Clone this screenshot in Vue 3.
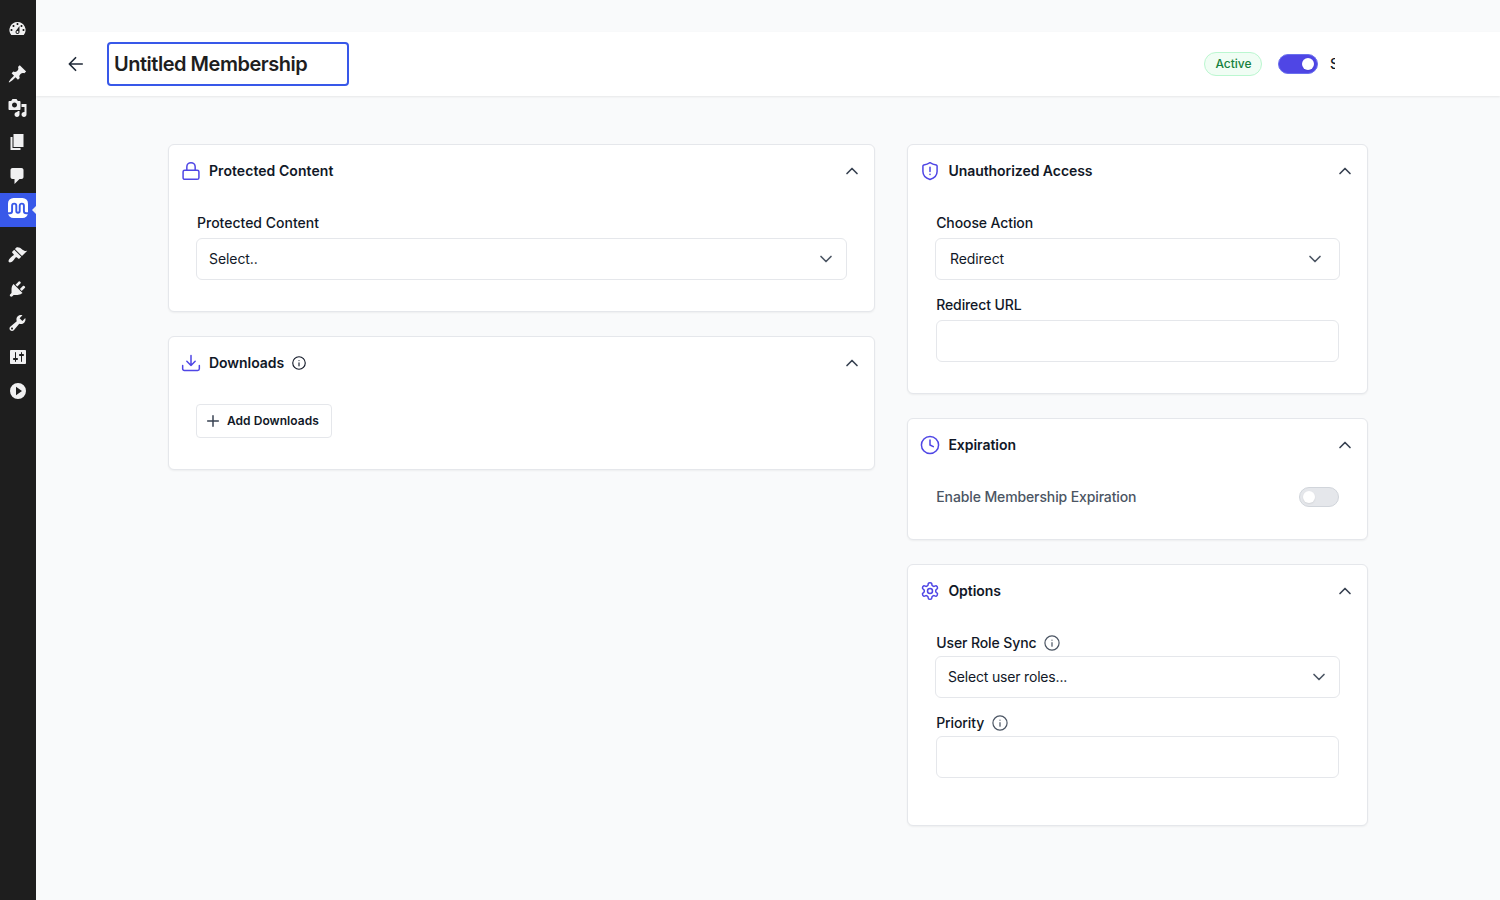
<script setup>
const menuTop = [
  { name: 'posts', d: 'M10.44 3.02l1.82-1.82 6.36 6.35-1.83 1.82c-1.05-.68-2.48-.57-3.41.36l-.75.75c-.92.93-1.04 2.35-.35 3.41l-1.83 1.82-2.41-2.41-2.8 2.79c-.42.42-3.38 2.71-3.8 2.29s1.86-3.39 2.28-3.81l2.79-2.79L4.1 9.36l1.83-1.82c1.05.69 2.48.57 3.4-.36l.75-.75c.93-.92 1.05-2.35.36-3.41z' },
  { name: 'media', d: 'M13 11V4c0-.55-.45-1-1-1h-1.67L9 1H5L3.67 3H2c-.55 0-1 .45-1 1v7c0 .55.45 1 1 1h10c.55 0 1-.45 1-1zM7 4.5c1.38 0 2.5 1.12 2.5 2.5S8.38 9.5 7 9.5 4.5 8.38 4.5 7 5.62 4.5 7 4.5zM14 6h5v10.5c0 1.38-1.12 2.5-2.5 2.5S14 17.88 14 16.5s1.12-2.5 2.5-2.5c.17 0 .34.02.5.05V9h-3V6zm-4 8.05V13h2v3.5c0 1.38-1.12 2.5-2.5 2.5S7 17.88 7 16.5 8.12 14 9.5 14c.17 0 .34.02.5.05z' },
  { name: 'pages', d: 'M6 15V2h10v13H6zm-1 1h8v2H3V5h2v11z' },
  { name: 'comments', d: 'M5 2h9c1.1 0 2 .9 2 2v7c0 1.1-.9 2-2 2h-2l-5 5v-5H5c-1.1 0-2-.9-2-2V4c0-1.1.9-2 2-2z' },
]
const menuBottom = [
  { name: 'appearance', d: 'M14.48 11.06L7.41 3.99l1.5-1.5c.5-.56 2.3-.47 3.51.32 1.21.8 1.43 1.28 2.91 2.1 1.18.64 2.45 1.26 4.45.85zm-.71.71L6.7 4.7 4.93 6.47c-.39.39-.39 1.02 0 1.41l1.06 1.06c.39.39.39 1.03 0 1.42-.6.6-1.43 1.11-2.21 1.69-.35.26-.7.53-1.01.84C1.43 14.23.4 16.08 1.4 17.07c.99 1 2.84-.03 4.18-1.36.31-.31.58-.66.85-1.02.57-.78 1.08-1.61 1.69-2.21.39-.39 1.02-.39 1.41 0l1.06 1.06c.39.39 1.02.39 1.41 0z' },
  { name: 'plugins', d: 'M13.11 4.36L9.87 7.6 8 5.73l3.24-3.24c.35-.34 1.05-.2 1.56.32.52.51.66 1.21.31 1.55zm-8 1.77l.91-1.12 9.01 9.01-1.19.84c-.71.71-2.63 1.16-3.82 1.16H6.14L4.9 17.26c-.59.59-1.54.59-2.12 0-.59-.58-.59-1.53 0-2.12l1.24-1.24v-3.88c0-1.13.4-3.19 1.09-3.89zm7.26 3.97l3.24-3.24c.34-.35 1.04-.21 1.55.31.52.51.66 1.21.31 1.55l-3.24 3.25z' },
  { name: 'tools', d: 'M16.68 9.77c-1.34 1.34-3.3 1.67-4.95.99l-5.41 6.52c-.99.99-2.59.99-3.58 0s-.99-2.59 0-3.57l6.52-5.42c-.68-1.65-.35-3.61.99-4.95 1.28-1.28 3.12-1.62 4.72-1.06l-2.89 2.89 2.82 2.82 2.86-2.87c.53 1.58.18 3.39-1.08 4.65zM3.81 16.21c.4.39 1.04.39 1.43 0 .4-.4.4-1.04 0-1.43-.39-.4-1.03-.4-1.43 0-.39.39-.39 1.03 0 1.43z' },
  { name: 'settings', d: 'M18 16V4c0-.55-.45-1-1-1H3c-.55 0-1 .45-1 1v12c0 .55.45 1 1 1h14c.55 0 1-.45 1-1zM8 11h1c.55 0 1 .45 1 1s-.45 1-1 1H8v1.5c0 .28-.22.5-.5.5s-.5-.22-.5-.5V13H6c-.55 0-1-.45-1-1s.45-1 1-1h1V5.5c0-.28.22-.5.5-.5s.5.22.5.5V11zm5-2h-1c-.55 0-1-.45-1-1s.45-1 1-1h1V5.5c0-.28.22-.5.5-.5s.5.22.5.5V7h1c.55 0 1 .45 1 1s-.45 1-1 1h-1v5.5c0 .28-.22.5-.5.5s-.5-.22-.5-.5V9z' },
  { name: 'collapse', d: 'M10 2a8 8 0 1 0 0 16 8 8 0 0 0 0-16zM8 14.2V5.8L14 10z' },
]
</script>

<template>
  <div class="page">
    <nav class="sidebar">
      <div class="item">
        <svg viewBox="0.5 0 20 20"><path fill-rule="evenodd" d="M3.76 16h12.48A7.998 7.998 0 0 0 10 3a7.998 7.998 0 0 0-6.24 13zM10 4c.55 0 1 .45 1 1s-.45 1-1 1-1-.45-1-1 .45-1 1-1zM6 6c.55 0 1 .45 1 1s-.45 1-1 1-1-.45-1-1 .45-1 1-1zm8 0c.55 0 1 .45 1 1s-.45 1-1 1-1-.45-1-1 .45-1 1-1zm-5.37 5.55L12 7v6c0 1.1-.9 2-2 2s-2-.9-2-2c0-.57.24-1.08.63-1.45zM4 10c.55 0 1 .45 1 1s-.45 1-1 1-1-.45-1-1 .45-1 1-1zm12 0c.55 0 1 .45 1 1s-.45 1-1 1-1-.45-1-1 .45-1 1-1zm-5 3c0-.55-.45-1-1-1s-1 .45-1 1 .45 1 1 1 1-.45 1-1z" /></svg>
      </div>
      <div class="spacer"></div>
      <div v-for="m in menuTop" :key="m.name" class="item">
        <svg viewBox="0.5 0 20 20"><path fill-rule="evenodd" :d="m.d" /></svg>
      </div>
      <div class="item active">
        <svg class="logo" viewBox="0 0 20 20">
          <rect width="20" height="20" rx="5.5" fill="#fff" />
          <path d="M-.5 15.200h2.300c1.500 0 2.300-.8 2.300-2.300V7.700a2.100 2.100 0 0 1 4.200 0v5.400a1.700 1.700 0 0 0 3.400 0V7.700a2.100 2.100 0 0 1 4.200 0v5.200c0 1.500.8 2.300 2.300 2.300h2.300" fill="none" stroke="#3858e9" stroke-width="1.900" />
        </svg>
      </div>
      <div class="spacer"></div>
      <div v-for="m in menuBottom" :key="m.name" class="item">
        <svg :viewBox="m.name === 'settings' || m.name === 'collapse' ? '0 0 20 20' : '0.5 0 20 20'"><path fill-rule="evenodd" :d="m.d" /></svg>
      </div>
    </nav>

    <div class="main">
      <header class="topbar">
        <svg class="ico back" viewBox="0 0 24 24"><path d="M11.500 19.500 4 12l7.500-7.500M4 12h15.500" /></svg>
        <div class="title">Untitled Membership</div>
        <div class="actions">
          <span class="badge">Active</span>
          <span class="toggle on"><i></i></span>
          <span class="clip">S</span>
        </div>
      </header>

      <div class="columns">
        <div class="col">
          <section class="card">
            <div class="head">
              <svg class="ico lead" viewBox="0 0 24 24"><rect x="2.500" y="11" width="19" height="11" rx="2" /><path d="M7 11V7a5 5 0 0 1 10 0v4" /></svg>
              <h2 class="wide">Protected Content</h2>
              <svg class="ico chev" viewBox="0 0 24 24"><path d="m18 15-6-6-6 6" /></svg>
            </div>
            <div class="body">
              <div class="label">Protected Content</div>
              <div class="select"><span>Select..</span><svg class="ico down" viewBox="0 0 24 24"><path d="m6 9 6 6 6-6" /></svg></div>
            </div>
          </section>

          <section class="card">
            <div class="head">
              <svg class="ico lead" viewBox="0 0 24 24"><path d="M22 15v4a2 2 0 0 1-2 2H4a2 2 0 0 1-2-2v-4M7 10l5 5 5-5M12 15V3" /></svg>
              <h2>Downloads</h2>
              <svg class="ico info small" viewBox="0 0 24 24"><circle cx="12" cy="12" r="10" /><path d="M12 16.500v-5M12 8v.1" /></svg>
              <svg class="ico chev" viewBox="0 0 24 24"><path d="m18 15-6-6-6 6" /></svg>
            </div>
            <div class="body">
              <div class="button"><svg class="ico plus" viewBox="0 0 24 24"><path d="M4 12h16M12 4v16" /></svg>Add Downloads</div>
            </div>
          </section>
        </div>

        <div class="col right">
          <section class="card">
            <div class="head">
              <svg class="ico lead" viewBox="0 0 24 24"><path d="M20.500 12.500c0 5-3.300 8-8.500 9.700-5.200-1.700-8.500-4.700-8.500-9.700V6c0-.7.4-1 1-1.200C7.500 4.400 9.700 3.600 12 2c2.300 1.600 4.500 2.400 7.500 2.800.6.200 1 .5 1 1.200zM12 7.500v5M12 16v.1" /></svg>
              <h2>Unauthorized Access</h2>
              <svg class="ico chev" viewBox="0 0 24 24"><path d="m18 15-6-6-6 6" /></svg>
            </div>
            <div class="body">
              <div class="label">Choose Action</div>
              <div class="select native"><span>Redirect</span><svg class="ico down" viewBox="0 0 24 24"><path d="m6 9 6 6 6-6" /></svg></div>
              <div class="label next">Redirect URL</div>
              <div class="input"></div>
            </div>
          </section>

          <section class="card">
            <div class="head">
              <svg class="ico lead" viewBox="0 0 24 24"><circle cx="12" cy="12" r="10.300" /><path d="M12 6v6l4 2" /></svg>
              <h2>Expiration</h2>
              <svg class="ico chev" viewBox="0 0 24 24"><path d="m18 15-6-6-6 6" /></svg>
            </div>
            <div class="body expiry">
              <span class="hint">Enable Membership Expiration</span>
              <span class="toggle"><i></i></span>
            </div>
          </section>

          <section class="card">
            <div class="head">
              <svg class="ico lead" viewBox="0 0 24 24"><path d="M12.220 2h-.44a2 2 0 0 0-2 2v.18a2 2 0 0 1-1 1.730l-.43.25a2 2 0 0 1-2 0l-.15-.08a2 2 0 0 0-2.730.730l-.22.38a2 2 0 0 0 .73 2.730l.15.1a2 2 0 0 1 1 1.720v.51a2 2 0 0 1-1 1.740l-.15.09a2 2 0 0 0-.73 2.730l.22.38a2 2 0 0 0 2.730.730l.15-.08a2 2 0 0 1 2 0l.43.25a2 2 0 0 1 1 1.730V20a2 2 0 0 0 2 2h.44a2 2 0 0 0 2-2v-.18a2 2 0 0 1 1-1.730l.43-.25a2 2 0 0 1 2 0l.15.08a2 2 0 0 0 2.730-.73l.22-.39a2 2 0 0 0-.73-2.730l-.15-.08a2 2 0 0 1-1-1.740v-.5a2 2 0 0 1 1-1.740l.15-.09a2 2 0 0 0 .73-2.730l-.22-.38a2 2 0 0 0-2.730-.73l-.15.08a2 2 0 0 1-2 0l-.43-.25a2 2 0 0 1-1-1.730V4a2 2 0 0 0-2-2z" /><circle cx="12" cy="12" r="3" /></svg>
              <h2>Options</h2>
              <svg class="ico chev" viewBox="0 0 24 24"><path d="m18 15-6-6-6 6" /></svg>
            </div>
            <div class="body options">
              <div class="label">User Role Sync<svg class="ico info" viewBox="0 0 24 24"><circle cx="12" cy="12" r="10" /><path d="M12 16.500v-5M12 8v.1" /></svg></div>
              <div class="select roles"><span>Select user roles...</span><svg class="ico down" viewBox="0 0 24 24"><path d="m6 9 6 6 6-6" /></svg></div>
              <div class="label next">Priority<svg class="ico info" viewBox="0 0 24 24"><circle cx="12" cy="12" r="10" /><path d="M12 16.500v-5M12 8v.1" /></svg></div>
              <div class="input"></div>
            </div>
          </section>
        </div>
      </div>
    </div>
  </div>
</template>

<style>
html, body { margin: 0; background: #f9fafb; }
</style>

<style scoped>
.page { display: flex; height: 900px; overflow: hidden; background: #f9fafb; font-family: Inter, "Liberation Sans", sans-serif; font-size: 14px; line-height: 20px; color: #111827; }
.page * { box-sizing: border-box; }
.sidebar { width: 36px; flex: none; background: #1e1e1e; padding-top: 12px; }
.item { height: 34px; display: flex; align-items: center; justify-content: center; }
.item svg { width: 20px; height: 20px; fill: #f0f0f1; display: block; }
.item.active { background: #3858e9; position: relative; }
.item.active::after { content: ""; position: absolute; right: 0; top: 13px; border: 4px solid transparent; border-left-width: 0; border-right-color: #f0f0f1; }
.item.active .logo { margin: -4px 0 0; }
.spacer { height: 11px; }
.main { flex: 1; padding-top: 32px; }
.ico { flex: none; display: block; width: 20px; height: 20px; fill: none; stroke: currentColor; stroke-width: 1.800; stroke-linecap: round; stroke-linejoin: round; }
.topbar { height: 64px; background: #fff; box-shadow: 0 1px 2px rgba(0, 0, 0, .08); display: flex; align-items: center; padding: 0 165px 0 30px; }
.back { color: #1f2937; stroke-width: 2; }
.title { width: 242px; height: 44px; margin-left: 21px; border: 2px solid #3858e9; border-radius: 4px; padding-left: 5px; font-size: 20px; font-weight: 600; line-height: 40px; color: #1e1e1e; letter-spacing: -.48px; white-space: nowrap; }
.actions { margin-left: auto; display: flex; align-items: center; }
.badge { width: 58px; height: 24px; border: 1px solid #bbf7d0; border-radius: 12px; background: #f0fdf4; color: #15803d; font-size: 12px; font-weight: 500; line-height: 22px; text-align: center; padding-left: 1px; }
.toggle { display: flex; align-items: center; width: 40px; height: 20px; border-radius: 10px; border: 1px solid #d1d5db; background: #e5e7eb; padding: 0 3px; }
.toggle i { width: 12px; height: 12px; border-radius: 50%; background: #fff; box-shadow: 0 1px 2px rgba(0, 0, 0, .08); }
.toggle.on { margin-left: 16px; background: #4f46e5; border-color: #6a70ee; justify-content: flex-end; }
.clip { margin-left: 12px; width: 5px; overflow: hidden; font-weight: 500; }
.columns { width: 1200px; margin: 48px auto 0; display: grid; grid-template-columns: 707px 461px; gap: 32px; align-items: start; }
.col { display: grid; gap: 24px; }
.card { border: 1px solid #e5e7eb; border-radius: 6px; background: #fff; box-shadow: 0 1px 2px rgba(0, 0, 0, .05); }
.head { height: 52px; display: flex; align-items: center; padding: 0 12px; }
.head h2 { margin: 0 0 0 8px; font-size: 14px; font-weight: 600; line-height: 20px; letter-spacing: -.05px; }
.head h2.wide { letter-spacing: .06px; }
.right .head h2 { margin-left: 8.4px; }
.lead { color: #4f46e5; }
.chev { margin-left: auto; color: #374151; stroke-width: 2; }
.body { padding: 15px 27px 31px; }
.label { height: 20px; margin: 1px 1px 5px; display: flex; align-items: center; font-weight: 500; }
.label.next { margin-top: 15px; }
.right .label { padding-left: .2px; letter-spacing: -.1px; }
.select { height: 42px; border: 1px solid #e5e7eb; border-radius: 6px; background: #fff; display: flex; align-items: center; justify-content: space-between; padding: 0 10px 0 12px; letter-spacing: -.08px; }
.select.native { padding: 0 14px; }
.down { color: #4b5563; stroke-width: 2; }
.input { height: 42px; margin: 0 1px; border: 1px solid #e5e7eb; border-radius: 6px; }
.info { width: 18px; height: 18px; padding: .5px; margin-left: 6.6px; color: #4b5563; stroke-width: 1.700; }
.info.small { width: 16px; height: 16px; margin-left: 6.6px; color: #111827; stroke-width: 1.800; }
.button { width: 136px; height: 34px; border: 1px solid #e5e7eb; border-radius: 4px; display: flex; align-items: center; padding-left: 8px; font-size: 12px; font-weight: 600; letter-spacing: .04px; white-space: nowrap; }
.plus { width: 16px; height: 16px; margin-right: 6px; color: #374151; stroke-width: 2.200; }
.expiry { display: flex; align-items: center; justify-content: space-between; padding: 16px 28px 32px; color: #4b5563; font-weight: 500; }
.hint { padding-left: .3px; letter-spacing: -.12px; }
.options { padding-bottom: 47px; }
.options .label { margin-bottom: 3px; }
.select.roles { letter-spacing: -.18px; }
</style>
